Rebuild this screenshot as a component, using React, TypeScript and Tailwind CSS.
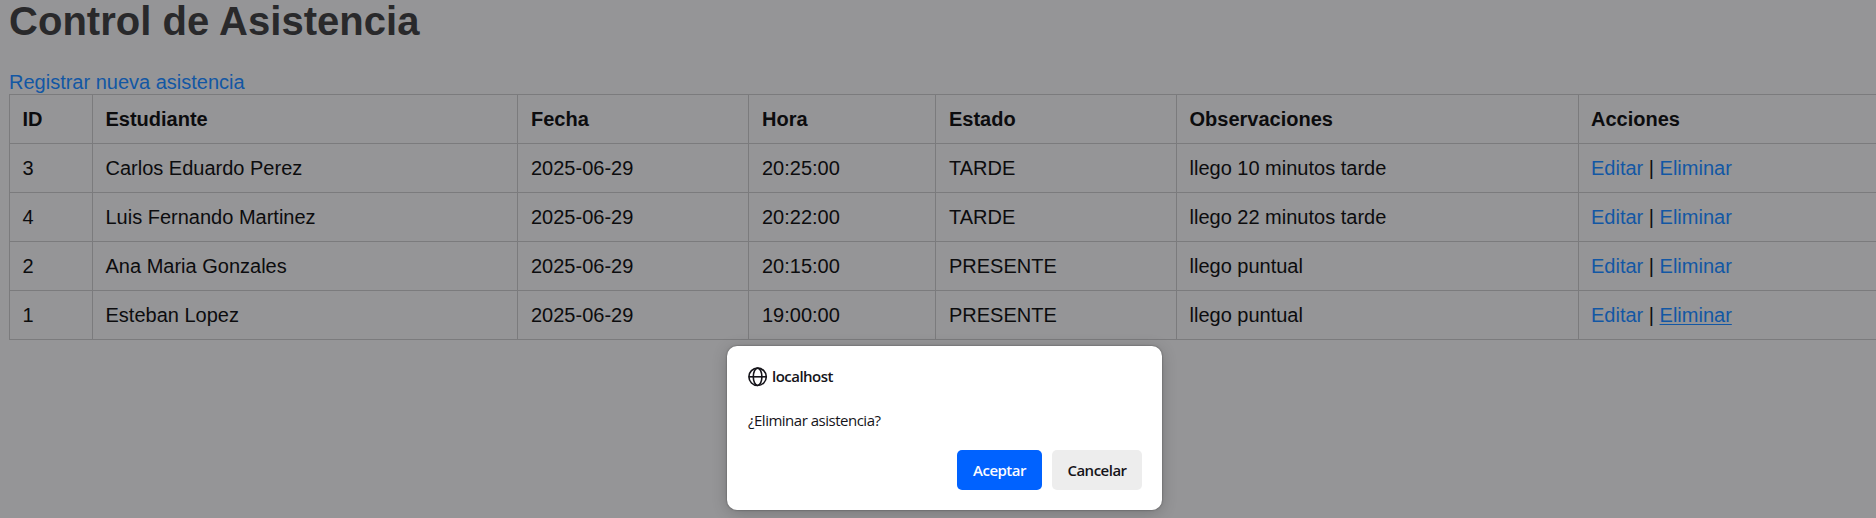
import React from "react";

type Attendance = {
  id: number;
  student: string;
  date: string;
  time: string;
  status: string;
  notes: string;
  active?: boolean;
};

const rows: Attendance[] = [
  { id: 3, student: "Carlos Eduardo Perez", date: "2025-06-29", time: "20:25:00", status: "TARDE", notes: "llego 10 minutos tarde" },
  { id: 4, student: "Luis Fernando Martinez", date: "2025-06-29", time: "20:22:00", status: "TARDE", notes: "llego 22 minutos tarde" },
  { id: 2, student: "Ana Maria Gonzales", date: "2025-06-29", time: "20:15:00", status: "PRESENTE", notes: "llego puntual" },
  { id: 1, student: "Esteban Lopez", date: "2025-06-29", time: "19:00:00", status: "PRESENTE", notes: "llego puntual", active: true },
];

const headers = ["ID", "Estudiante", "Fecha", "Hora", "Estado", "Observaciones", "Acciones"];

function Row({ cells, bold = false }: { cells: React.ReactNode[]; bold?: boolean }) {
  return (
    <div
      className={
        "grid h-[49px] grid-cols-[83px_425px_231px_187px_241px_402px_1fr] border-b border-[#7b7b7d] " +
        (bold ? "font-bold" : "font-normal")
      }
    >
      {cells.map((cell, i) => (
        <div
          key={i}
          className={
            "flex items-center border-l border-[#7b7b7d] whitespace-pre " +
            (i >= 2 && i <= 4 ? "pl-[13px]" : i === 6 ? "pl-3" : "pl-[12.5px]")
          }
        >
          <span>{cell}</span>
        </div>
      ))}
    </div>
  );
}

function Globe() {
  return (
    <svg width="20" height="20" viewBox="0 0 20 20" fill="none" stroke="#15141a" strokeWidth="1.6">
      <circle cx="9.6" cy="9.8" r="8.7" />
      <ellipse cx="9.6" cy="9.8" rx="4.3" ry="8.7" />
      <path d="M0.9 9.8h17.4" />
    </svg>
  );
}

function ConfirmDialog() {
  return (
    <div className="absolute top-[346px] left-[727px] flex h-[164px] w-[435px] flex-col rounded-[10px] bg-white pt-[21px] pr-5 pb-5 pl-[21px] font-['Open_Sans','Noto_Sans',sans-serif] text-[15px] leading-5 text-[#15141a] shadow-[0_0_2px_rgba(0,0,0,0.45),0_3px_16px_rgba(0,0,0,0.2)]">
      <div className="flex items-start gap-1">
        <Globe />
        <span className="leading-[18px] font-semibold tracking-[-0.52px]">localhost</span>
      </div>
      <p className="mt-[23px] tracking-[-0.49px]">¿Eliminar asistencia?</p>
      <div className="mt-auto flex justify-end gap-[10px] font-semibold tracking-[-0.5px]">
        <button className="h-10 w-[85px] rounded-[5px] bg-[#0062ff] pb-px text-[#fbfbfe]">Aceptar</button>
        <button className="h-10 w-[90px] rounded-[5px] bg-[#ededed] pb-px">Cancelar</button>
      </div>
    </div>
  );
}

export default function App() {
  return (
    <div className="relative h-[518px] w-full overflow-hidden bg-[#959597] pl-[9px] font-['Liberation_Sans',Arial,sans-serif] text-[20px] leading-[23px] text-[#0c0c0e]">
      <h1 className="h-[71px] text-[40px] leading-[42px] font-bold tracking-[0.04px] text-[#29292b]">Control de Asistencia</h1>
      <a className="block text-[#1257a4]">Registrar nueva asistencia</a>
      <div className="w-[1884px] border-t border-[#7b7b7d]">
        <Row cells={headers} bold />
        {rows.map((r) => (
          <Row
            key={r.id}
            cells={[
              r.id,
              r.student,
              r.date,
              r.time,
              r.status,
              r.notes,
              <>
                <a className="text-[#1257a4]">Editar</a>
                {" | "}
                <a className={r.active ? "text-[#1257a4] underline decoration-1 underline-offset-2" : "text-[#1257a4]"}>Eliminar</a>
              </>,
            ]}
          />
        ))}
      </div>
      <ConfirmDialog />
    </div>
  );
}
